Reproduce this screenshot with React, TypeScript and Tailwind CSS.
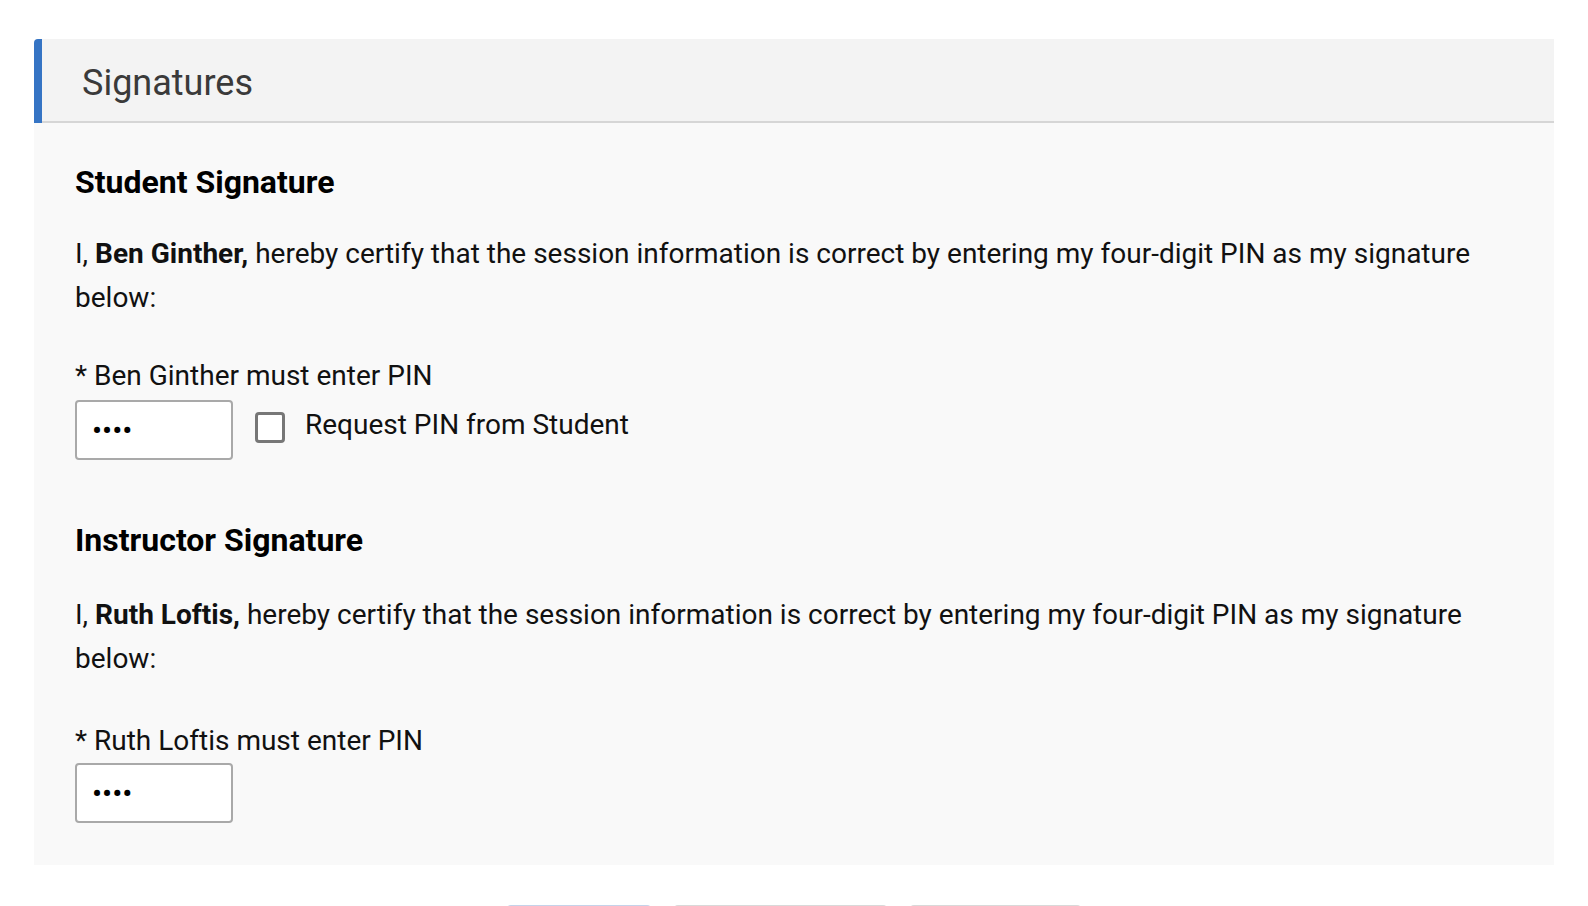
import { useState } from "react";

type Signer = {
  role: string;
  name: string;
  requestPin?: boolean;
};

const font = { fontFamily: "Roboto, 'Liberation Sans', sans-serif" };

function PinInput() {
  return (
    <input
      type="password"
      defaultValue="1234"
      readOnly
      aria-label="PIN"
      className="h-[60px] w-[158px] rounded-[4px] border-2 border-[#a9a9a9] bg-white pl-[15px] text-[30px] text-black outline-none"
    />
  );
}

function SignatureBlock({
  signer,
  first,
}: {
  signer: Signer;
  first: boolean;
}) {
  const [requested, setRequested] = useState(false);

  return (
    <div>
      <h3
        className={`${first ? "" : "mt-[60px]"} text-[32px] font-bold leading-[40px] text-black`}
      >
        {signer.role} Signature
      </h3>
      <p
        className={`${first ? "mt-[30px]" : "mt-[33px]"} text-[28px] leading-[44px] text-[#111]`}
      >
        I, <strong className="font-bold">{signer.name},</strong> hereby certify
        that the session information is correct by entering my four-digit PIN
        as my signature below:
      </p>
      <label
        className={`${first ? "mt-[38px]" : "mt-[42px]"} block text-[28px] leading-[36px] text-[#111]`}
      >
        * {signer.name} must enter PIN
      </label>
      <div className={`${first ? "mt-[6px]" : "mt-[4px]"} flex items-start`}>
        <PinInput />
        {signer.requestPin && (
          <>
            <input
              type="checkbox"
              checked={requested}
              onChange={(event) => setRequested(event.target.checked)}
              className="ml-[22px] mt-[12px] h-[31px] w-[30px] appearance-none rounded-[4px] border-[3px] border-[#777] bg-white"
            />
            <span className="ml-[20px] mt-[7px] text-[28px] leading-[36px] text-[#111]">
              Request PIN from Student
            </span>
          </>
        )}
      </div>
    </div>
  );
}

export default function App() {
  const signers: Signer[] = [
    { role: "Student", name: "Ben Ginther", requestPin: true },
    { role: "Instructor", name: "Ruth Loftis" },
  ];

  return (
    <div className="min-h-screen bg-white pl-[34px] pt-[39px]" style={font}>
      <section className="w-[1520px]">
        <div className="flex h-[84px]">
          <div className="w-[8px] rounded-tl-[4px] bg-[#3574c4]" />
          <div className="flex-1 border-b-2 border-[#d6d6d6] bg-[#f3f3f3] pl-[40px] pt-[23px]">
            <h2 className="text-[36px] leading-[42px] text-[#3a3a3a]">
              Signatures
            </h2>
          </div>
        </div>
        <div className="bg-[#f9f9f9] pb-[42px] pl-[41px] pr-[41px] pt-[39px]">
          {signers.map((signer, index) => (
            <SignatureBlock
              key={signer.role}
              signer={signer}
              first={index === 0}
            />
          ))}
        </div>
      </section>

      <div className="ml-[473px] mt-[40px] flex gap-[23px]">
        <button className="h-[44px] w-[144px] rounded-[4px] border-t border-[#c5d3ea] bg-white" />
        <button className="h-[44px] w-[213px] rounded-[4px] border-t border-[#d9d9d9] bg-white" />
        <button className="h-[44px] w-[171px] rounded-[4px] border-t border-[#d9d9d9] bg-white" />
      </div>
    </div>
  );
}
